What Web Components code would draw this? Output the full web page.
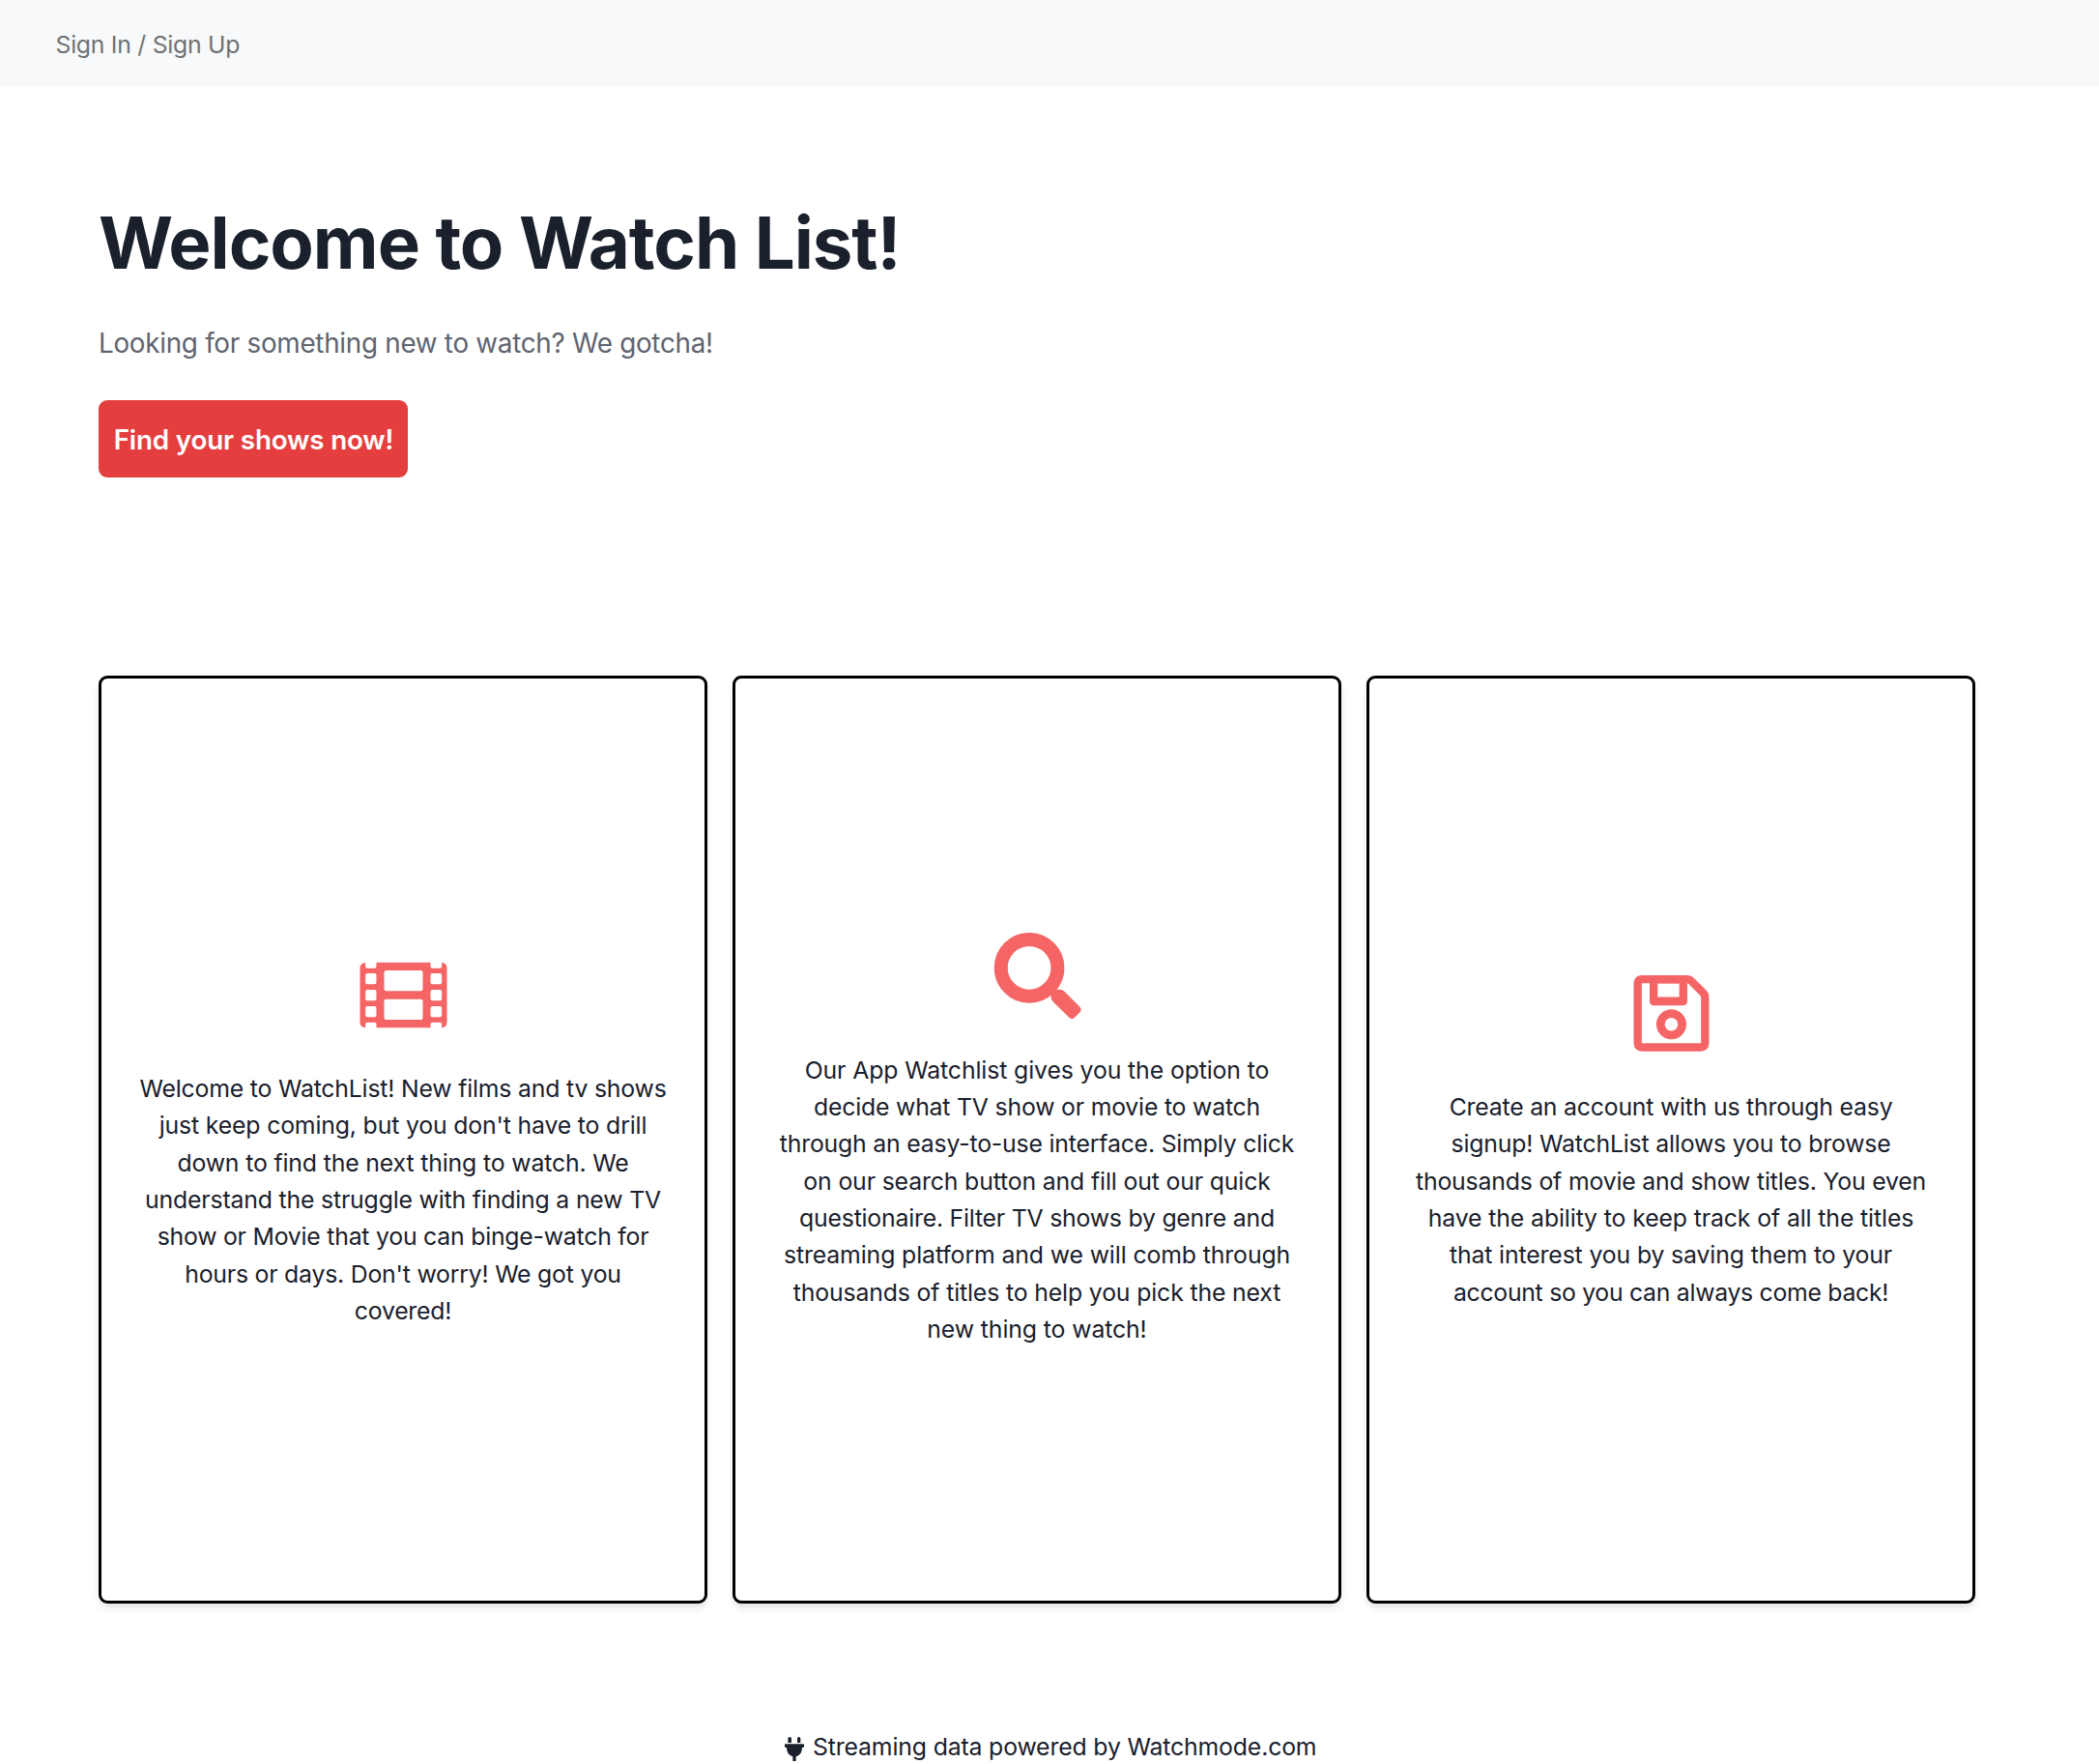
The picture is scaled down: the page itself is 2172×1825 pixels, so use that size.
<!DOCTYPE html>
<html lang="en">
<head>
<meta charset="utf-8">
<title>Watch List</title>
<style>
  html, body { margin: 0; background: #fff; }
  body { font-family: Inter, "Liberation Sans", sans-serif; font-size: 24.8px; line-height: 38.3px; color: #1a202c; }
</style>
</head>
<body>
<watch-app></watch-app>
<script>
const icons = {
  film: `<svg viewBox="94.5 40 273 273"><path fill-rule="evenodd" d="M113 75v12q0 6 6 6h22q6 0 6-6V75h168v12q0 6 6 6h23q6 0 6-6V75q16 3 16 17v169q0 14-16 17v-11q0-6-6-6h-23q-6 0-6 6v11H147v-11q0-6-6-6h-22q-6 0-6 6v11q-17-3-17-17V92q0-14 17-17z
    M119 109h22q6 0 6 6v22q0 6-6 6h-22q-6 0-6-6v-22q0-6 6-6z M119 160h22q6 0 6 6v22q0 6-6 6h-22q-6 0-6-6v-22q0-6 6-6z M119 211h22q6 0 6 6v22q0 6-6 6h-22q-6 0-6-6v-22q0-6 6-6z
    M321 109h23q6 0 6 6v22q0 6-6 6h-23q-6 0-6-6v-22q0-6 6-6z M321 160h23q6 0 6 6v22q0 6-6 6h-23q-6 0-6-6v-22q0-6 6-6z M321 211h23q6 0 6 6v22q0 6-6 6h-23q-6 0-6-6v-22q0-6 6-6z
    M177 100h108q6 0 6 6v52q0 6-6 6H177q-6 0-6-6v-52q0-6 6-6z M177 189h108q6 0 6 6v52q0 6-6 6H177q-6 0-6-6v-52q0-6 6-6z"/></svg>`,
  search: `<svg viewBox="82.5 74.4 273 273"><circle cx="193.7" cy="183.3" r="88" fill="none" stroke="currentColor" stroke-width="42"/><path d="M276 251h14q7 0 12 5l48 48q9 9 0 18l-15 15q-9 9-18 0l-49-48q-7-7-7-14v-14z"/></svg>`,
  save: `<svg viewBox="69 67.5 273 273"><path fill="none" stroke="currentColor" stroke-width="25" d="M114 98h142q6 0 11 5l37 37q6 6 6 15v141q0 13-13 13H114q-13 0-13-13V111q0-13 13-13z"/><path fill-rule="evenodd" d="M138 100h117v66q0 13-13 13h-91q-13 0-13-13zM163 111v42h67v-42z"/><circle cx="205.5" cy="237.7" r="33.5" fill="none" stroke="currentColor" stroke-width="26"/></svg>`,
  plug: `<svg viewBox="36 36 60 75"><path d="M46 41q0-5 5.500-5t5.500 5v13H46zM75 41q0-5 5-5t5 5v13H75zM38 57.500h56q2 0 2 2V66q0 3-3 3h-3q0 23-19 28v13q0 1-1 1h-8q-1 0-1-1V97Q42 92 42 69h-3q-3 0-3-3v-6.500q0-2 2-2z"/></svg>`
};

const define = (name, html) => customElements.define(name, class extends HTMLElement {
  constructor() {
    super();
    this.attachShadow({ mode: 'open' }).innerHTML = html;
  }
});

customElements.define('app-icon', class extends HTMLElement {
  connectedCallback() {
    if (this.shadowRoot) return;
    this.attachShadow({ mode: 'open' }).innerHTML =
      `<style>:host{display:block;flex:none}svg{display:block;width:100%;height:100%;fill:currentColor}</style>` + icons[this.getAttribute('name')];
  }
});

define('nav-bar', `<style>
  :host { display: flex; align-items: center; height: 90px; box-sizing: border-box; padding: 2px 0 0 57.5px; background: #f7f9fb; color: #707172; letter-spacing: -.28px; }
</style><slot></slot>`);

define('hero-banner', `<style>
  :host { display: flex; flex-direction: column; align-items: flex-start; padding: 116px 102px 0; }
  h1 { margin: 0 0 38.600px; font-size: 74.300px; line-height: 90px; font-weight: 700; letter-spacing: -1.040px; white-space: nowrap; }
  p { margin: 0 0 39.400px; font-size: 27.800px; line-height: 40px; color: #60646f; letter-spacing: -.270px; }
  button { height: 80px; width: 320px; padding: 2px 0 0 1px; border: 0; border-radius: 9px; background: #e53e3e; color: #fff; font: 600 27.800px Inter, sans-serif; letter-spacing: -.170px; }
</style><h1><slot name="title"></slot></h1><p><slot name="lead"></slot></p><button><slot name="action"></slot></button>`);

define('card-row', `<style>
  :host { display: grid; grid-template-columns: repeat(3, 1fr); gap: 26px; width: 1942px; height: 960px; margin: 205px 0 0 102px; }
</style><slot></slot>`);

customElements.define('feature-card', class extends HTMLElement {
  connectedCallback() {
    if (this.shadowRoot) return;
    this.attachShadow({ mode: 'open' }).innerHTML = `<style>
      :host { display: flex; flex-direction: column; align-items: center; justify-content: center; box-sizing: border-box; padding-top: 1.200px; border: 3px solid #000; border-radius: 9px; text-align: center; box-shadow: 0 6px 10px -2px rgba(0,0,0,.1), 0 3px 6px -2px rgba(0,0,0,.06); }
      app-icon { width: 91px; height: 91px; margin-bottom: 32px; color: #f56565; }
    </style><app-icon name="${this.getAttribute('icon')}"></app-icon><slot></slot>`;
  }
});

customElements.define('text-line', class extends HTMLElement {
  connectedCallback() {
    if (this.shadowRoot) return;
    this.attachShadow({ mode: 'open' }).innerHTML =
      `<style>:host{display:block;white-space:nowrap;letter-spacing:${this.getAttribute('track') || 0}px}</style><slot></slot>`;
  }
});

define('page-footer', `<style>
  :host { display: flex; justify-content: center; height: 36.500px; padding: 129.500px 0 0 2px; overflow: hidden; letter-spacing: -.153px; }
  app-icon { width: 20px; height: 25px; margin: 8.500px 9.500px 0 0; }
</style><app-icon name="plug"></app-icon><slot></slot>`);

define('watch-app', `<style>:host { display: block; height: 1825px; overflow: hidden; }</style>
<nav-bar>Sign In / Sign Up</nav-bar>
<hero-banner><span slot="title">Welcome to Watch List!</span><span slot="lead">Looking for something new to watch? We gotcha!</span><span slot="action">Find your shows now!</span></hero-banner>
<card-row>
  <feature-card icon="film">
    <text-line track="-.188">Welcome to WatchList! New films and tv shows</text-line>
    <text-line track="-.156">just keep coming, but you don't have to drill</text-line>
    <text-line track="-.147">down to find the next thing to watch. We</text-line>
    <text-line track="-.169">understand the struggle with finding a new TV</text-line>
    <text-line track="-.219">show or Movie that you can binge-watch for</text-line>
    <text-line track="-.210">hours or days. Don't worry! We got you</text-line>
    <text-line track="-.217">covered!</text-line>
  </feature-card>
  <feature-card icon="search">
    <text-line track="-.111">Our App Watchlist gives you the option to</text-line>
    <text-line track="-.193">decide what TV show or movie to watch</text-line>
    <text-line track="-.186">through an easy-to-use interface. Simply click</text-line>
    <text-line track="-.142">on our search button and fill out our quick</text-line>
    <text-line track="-.214">questionaire. Filter TV shows by genre and</text-line>
    <text-line track="-.112">streaming platform and we will comb through</text-line>
    <text-line track="-.140">thousands of titles to help you pick the next</text-line>
    <text-line track="-.104">new thing to watch!</text-line>
  </feature-card>
  <feature-card icon="save">
    <text-line track="-.205">Create an account with us through easy</text-line>
    <text-line track="-.175">signup! WatchList allows you to browse</text-line>
    <text-line track="-.174">thousands of movie and show titles. You even</text-line>
    <text-line track="-.111">have the ability to keep track of all the titles</text-line>
    <text-line track="-.127">that interest you by saving them to your</text-line>
    <text-line track="-.290">account so you can always come back!</text-line>
  </feature-card>
</card-row>
<page-footer>Streaming data powered by Watchmode.com</page-footer>`);
</script>
</body>
</html>
